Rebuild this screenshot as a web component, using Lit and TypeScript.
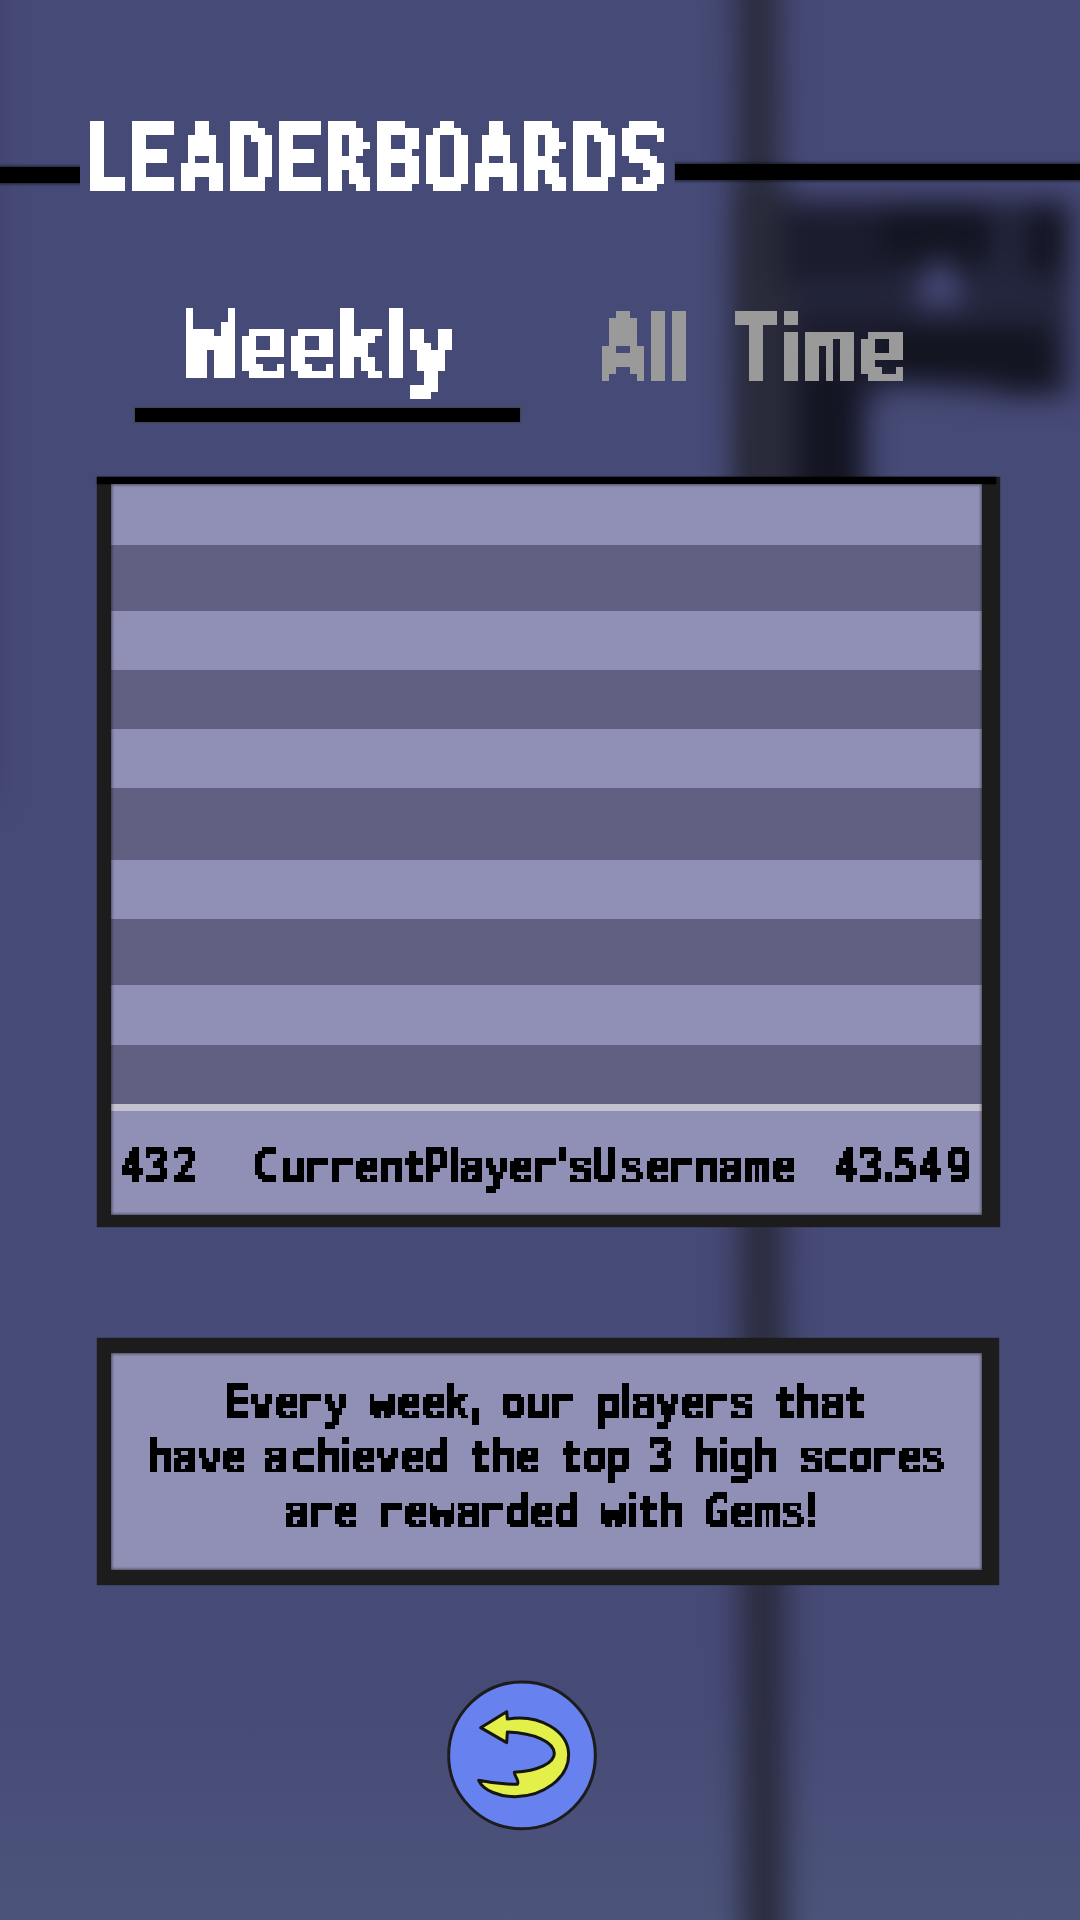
import { LitElement, html, svg, css } from "lit";
import { customElement, property, state } from "lit/decorators.js";

interface Word {
  text: string;
  from: number;
  to: number;
}

const w = (text: string, from: number, to: number): Word => ({ text, from, to });

const SLIM = "li.,!'t";
const UNITS: Record<string, number> = { l: 3, i: 3, ".": 3, ",": 3, "!": 3, "'": 3, t: 6, L: 6, m: 8, w: 8, W: 8 };
const units = (ch: string) => UNITS[ch] ?? 7;

const ruler = document.createElement("canvas").getContext("2d")!;

/** Left edge and width of a glyph's ink, in em. */
function ink(ch: string) {
  const family = SLIM.includes(ch) ? '"DejaVu Sans"' : '"DejaVu Sans Mono"';
  ruler.font = `bold 500px ${family}`;
  const m = ruler.measureText(ch);
  return { left: -m.actualBoundingBoxLeft / 500, width: (m.actualBoundingBoxLeft + m.actualBoundingBoxRight) / 500 };
}

/** One line of pixel lettering; words start and end at given x positions, glyphs sit on the pixel grid. */
@customElement("pixel-line")
export class PixelLine extends LitElement {
  static styles = css`
    :host { display: block; }
    .line { display: block; overflow: visible; }
    .word { font-family: "DejaVu Sans Mono", monospace; font-weight: 700; fill: currentColor; stroke: currentColor; }
    .slim { font-family: "DejaVu Sans", sans-serif; }
  `;
  @property({ attribute: false }) words: Word[] = [];
  @property({ type: Number }) width = 0;
  @property({ type: Number }) height = 0;
  @property({ type: Number }) baseline = 0;
  @property({ type: Boolean }) large = false;

  private snap(x: number) {
    if (this.large) return Math.round(x / 7) * 7;
    const k = Math.round(x / 3.5);
    return Math.floor(k / 2) * 7 + (k % 2 ? 4 : 0);
  }

  /** Snapped cell of each glyph in a word. */
  private cells(d: Word) {
    const cell = this.large ? 7 : 3.5;
    const chars = [...d.text];
    const pitch = (d.to - d.from) / chars.reduce((n, c) => n + units(c), -1);
    let at = 0;
    return chars.map((c) => {
      const x = this.snap(d.from + at * pitch);
      at += units(c);
      return { c, x, room: (units(c) - 1) * cell };
    });
  }

  private word(d: Word) {
    const size = this.large ? 92.3 : 46.1;
    const cell = this.large ? 7 : 3.5;
    const stretch = (cell * 6) / (ink(d.text === d.text.toUpperCase() ? "D" : "n").width * size);
    const xs = this.cells(d).map(({ c, x, room }) => {
      const g = ink(c);
      return (x + (room - g.width * size * stretch) / 2 - g.left * size * stretch) / stretch;
    });
    return svg`<text class="word" transform="scale(${stretch} 1)" x=${xs.join(" ")} y=${this.baseline + (this.large ? 0.8 : 0.4)}
      font-size=${size} stroke-width=${this.large ? 1.9 : 1.1}>${[...d.text].map((c) => (SLIM.includes(c) ? svg`<tspan class="slim">${c}</tspan>` : c))}</text>`;
  }

  private largeFilter() {
    return svg`
      <feFlood x="3" y="3" width="1" height="1" flood-color="#000" result="p"></feFlood>
      <feOffset in="p" x="0" y="0" width="7" height="7" result="cell"></feOffset>
      <feTile in="cell" result="grid"></feTile>
      <feComposite in="SourceGraphic" in2="grid" operator="in"></feComposite>
      <feComponentTransfer><feFuncA type="discrete" tableValues="0 1"></feFuncA></feComponentTransfer>
      <feMorphology operator="dilate" radius="3"></feMorphology>`;
  }

  private smallFilter() {
    return svg`
      <feFlood x="1" y="1" width="1" height="1" flood-color="#000" result="p1"></feFlood>
      <feFlood x="5" y="1" width="1" height="1" flood-color="#000" result="p2"></feFlood>
      <feFlood x="1" y="5" width="1" height="1" flood-color="#000" result="p3"></feFlood>
      <feFlood x="5" y="5" width="1" height="1" flood-color="#000" result="p4"></feFlood>
      <feMerge x="0" y="0" width="7" height="7" result="cell">
        <feMergeNode in="p1"></feMergeNode><feMergeNode in="p2"></feMergeNode>
        <feMergeNode in="p3"></feMergeNode><feMergeNode in="p4"></feMergeNode>
      </feMerge>
      <feTile in="cell" result="grid"></feTile>
      <feComposite in="SourceGraphic" in2="grid" operator="in"></feComposite>
      <feComponentTransfer><feFuncA type="discrete" tableValues="0 1"></feFuncA></feComponentTransfer>
      <feMorphology operator="dilate" radius="1" result="a"></feMorphology>
      <feFlood x="3" y="0" width="1" height="7" flood-color="#000" result="c"></feFlood>
      <feOffset in="c" x="0" y="0" width="7" height="7" result="c7"></feOffset>
      <feTile in="c7" result="cols"></feTile>
      <feOffset in="a" dx="1" result="ax"></feOffset>
      <feComposite in="ax" in2="cols" operator="in" result="fillx"></feComposite>
      <feMerge result="b"><feMergeNode in="a"></feMergeNode><feMergeNode in="fillx"></feMergeNode></feMerge>
      <feFlood x="0" y="3" width="7" height="1" flood-color="#000" result="r"></feFlood>
      <feOffset in="r" x="0" y="0" width="7" height="7" result="r7"></feOffset>
      <feTile in="r7" result="rows"></feTile>
      <feOffset in="b" dy="1" result="by"></feOffset>
      <feComposite in="by" in2="rows" operator="in" result="filly"></feComposite>
      <feMerge><feMergeNode in="b"></feMergeNode><feMergeNode in="filly"></feMergeNode></feMerge>`;
  }

  render() {
    return html`<svg class="line" width=${this.width} height=${this.height}>
      <defs>
        <filter id="mosaic" filterUnits="userSpaceOnUse" color-interpolation-filters="sRGB"
          x="0" y="0" width=${this.width} height=${this.height + 28}>
          ${this.large ? this.largeFilter() : this.smallFilter()}
        </filter>
        <clipPath id="cells">
          ${this.words.map((d) => this.cells(d).map((g) => svg`<rect x=${g.x} y="0" width=${g.room} height=${this.height + 28}></rect>`))}
        </clipPath>
      </defs>
      <g filter="url(#mosaic)"><g clip-path="url(#cells)">${this.words.map((d) => this.word(d))}</g></g>
    </svg>`;
  }
}

@customElement("night-backdrop")
export class NightBackdrop extends LitElement {
  static styles = css`
    :host { display: block; }
    .scene { display: block; }
  `;
  render() {
    return html`<svg class="scene" width="1080" height="1920">
      <defs>
        <linearGradient id="sky" x1="0" y1="0" x2="0" y2="1">
          <stop offset="0" stop-color="#464a76"></stop>
          <stop offset="0.88" stop-color="#464a76"></stop>
          <stop offset="1" stop-color="#4c547b"></stop>
        </linearGradient>
        <filter id="soft" color-interpolation-filters="sRGB" filterUnits="userSpaceOnUse" x="-60" y="-120" width="1240" height="2100"><feGaussianBlur stdDeviation="14"></feGaussianBlur></filter>
        <filter id="pole" color-interpolation-filters="sRGB" filterUnits="userSpaceOnUse" x="650" y="-60" width="240" height="2040"><feGaussianBlur stdDeviation="16 1"></feGaussianBlur></filter>
      </defs>
      <rect width="1080" height="1920" fill="url(#sky)"></rect>
      <rect x="-40" y="-60" width="40" height="860" fill="#3c3d62" opacity="0.6" filter="url(#soft)"></rect>
      <path d="M737 -20 H778 L786 1940 H743 Z" fill="#28293a" filter="url(#pole)"></path>
      <g filter="url(#soft)">
        <path d="M745 200 H1072 V395 H1000 L890 385 L868 405 V510 H745 Z" fill="#24263e"></path>
        <rect x="742" y="190" width="50" height="320" fill="#292b3a"></rect>
        <rect x="782" y="208" width="105" height="75" fill="#1b1c2d"></rect>
        <rect x="882" y="206" width="110" height="60" fill="#131522"></rect>
        <rect x="1026" y="206" width="38" height="68" fill="#131522"></rect>
        <rect x="795" y="312" width="110" height="70" fill="#1b1c2d"></rect>
        <rect x="885" y="326" width="168" height="52" fill="#121420"></rect>
        <rect x="1000" y="355" width="55" height="40" fill="#131522"></rect>
        <rect x="798" y="370" width="60" height="140" fill="#131522"></rect>
        <path d="M940 252 L964 304 H916 Z" fill="#4c5182"></path>
      </g>
    </svg>`;
  }
}

const STRIPES = [61, 66, 59, 59, 59, 72, 59, 66, 60, 59];

@customElement("app-root")
export class AppRoot extends LitElement {
  static styles = css`
    :host { display: block; position: relative; width: 1080px; height: 1920px; overflow: hidden; background: #464a76; }
    .backdrop { position: absolute; inset: 0; }
    .page { position: relative; display: flex; flex-direction: column; }
    .header { display: flex; margin-top: 114px; height: 86px; color: #fff; }
    .rule { height: 16px; background: #000; box-shadow: 0 0 3px 1px #0009; clip-path: inset(-4px 0); }
    .left { width: 80px; margin-top: 53px; }
    .title { width: 591.6px; margin-left: 3px; }
    .right { flex: 1; margin-top: 49.5px; }
    .tabs { display: flex; margin-top: 90px; height: 133px; padding-left: 135px; gap: 60px; }
    .tab { display: flex; flex-direction: column; width: 385px; color: #9a9a9a; }
    .active { color: #fff; }
    .weekly { padding: 4px 0 0 2px; }
    .alltime { padding: 7px 0 0 1px; }
    .bar { height: 14px; background: #000; box-shadow: 0 0 1px 1px #444a; }
    .board { margin: 54px 0 0 97px; width: 871px; padding: 0 18px 12px 14px; background: #1c1c1c; box-shadow: 0 0 1px #1c1c1c; height: 738px; }
    .top { height: 7px; margin: 0 -14px 0 -14px; background: #000; box-shadow: 0 0 2px #000; }
    .field { position: relative; overflow: hidden; background: #908fb5; }
    .field::after { content: ""; position: absolute; inset: 0; box-shadow: inset 0 0 3px 1px #1c1c1c99; }
    .stripe { background: #908fb5; }
    .odd { background: #616082; }
    .divider { height: 7px; background: #c4c2d0; }
    .me { height: 103px; padding-top: 1px; color: #000; }
    .card { margin: 111px 0 0 97px; width: 871px; padding: 15px 17px 15px 14px; background: #1c1c1c; box-shadow: 0 0 1px #1c1c1c; }
    .note { padding-top: 16px; height: 201px; color: #000; }
    .back { display: block; margin: 93px 0 0 445px; padding: 0; border: 0; width: 154px; height: 154px; background: none; }
    .icon { display: block; }
  `;
  @state() private tab = "weekly";

  render() {
    return html`
      <night-backdrop class="backdrop"></night-backdrop>
      <main class="page">
        <header class="header">
          <div class="rule left"></div>
          <pixel-line class="title" large .words=${[w("LEADERBOARDS", 7, 583)]} .width=${591} .height=${86} .baseline=${77}></pixel-line>
          <div class="rule right"></div>
        </header>
        <nav class="tabs">
          <div class="tab active" @click=${() => (this.tab = "weekly")}>
            <pixel-line class="weekly" large .words=${[w("Weekly", 49, 317)]} .width=${383} .height=${114} .baseline=${84}></pixel-line>
            <div class="bar"></div>
          </div>
          <div class="tab" @click=${() => (this.tab = "all")}>
            <pixel-line class="alltime" large .words=${[w("All", 21, 106), w("Time", 152, 321)]} .width=${383} .height=${111} .baseline=${84}></pixel-line>
          </div>
        </nav>
        <section class="board">
          <div class="top"></div>
          <div class="field">
            ${STRIPES.map((h, i) => html`<div class="stripe ${i % 2 ? "odd" : ""}" style="height:${h}px"></div>`)}
            <div class="divider"></div>
            <div class="me">
              <pixel-line .words=${[w("432", 12, 82.5), w("CurrentPlayer'sUsername", 145, 682.7), w("43.549", 725.7, 856)]} .width=${871} .height=${103} .baseline=${70}></pixel-line>
            </div>
          </div>
        </section>
        <section class="card">
          <div class="field note">
            <pixel-line .words=${[w("Every", 116, 236), w("week,", 259, 369), w("our", 392, 462), w("players", 486, 641), w("that", 665, 753)]} .width=${872} .height=${54} .baseline=${49}></pixel-line>
            <pixel-line .words=${[w("have", 37, 132.5), w("achieved", 155.5, 336), w("the", 359, 426), w("top", 450, 517), w("3", 540, 561), w("high", 585, 666), w("scores", 689, 834)]} .width=${872} .height=${55} .baseline=${49}></pixel-line>
            <pixel-line .words=${[w("are", 175.5, 246), w("rewarded", 269, 467), w("with", 490, 571), w("Gems!", 595, 705)]} .width=${872} .height=${54} .baseline=${49}></pixel-line>
          </div>
        </section>
        <button class="back" aria-label="Back">
          <svg class="icon" width="154" height="154" viewBox="0 0 462 462">
            <circle cx="231" cy="232" r="220" fill="#6781ee" stroke="#1c1c1c" stroke-width="9"></circle>
            <path d="M107 149 L185 101 L187 123 C285 107 370 160 371 230 C371 300 295 356 210 356 C165 356 115 339 101 307 C133 314 176 319 217 319 C225 310 209 296 208 283 C280 279 328 255 328 226 C326 191 270 166 187 162 L185 194 Z"
              fill="#e2f049" stroke="#15160f" stroke-width="9" stroke-linejoin="round"></path>
          </svg>
        </button>
      </main>
    `;
  }
}
